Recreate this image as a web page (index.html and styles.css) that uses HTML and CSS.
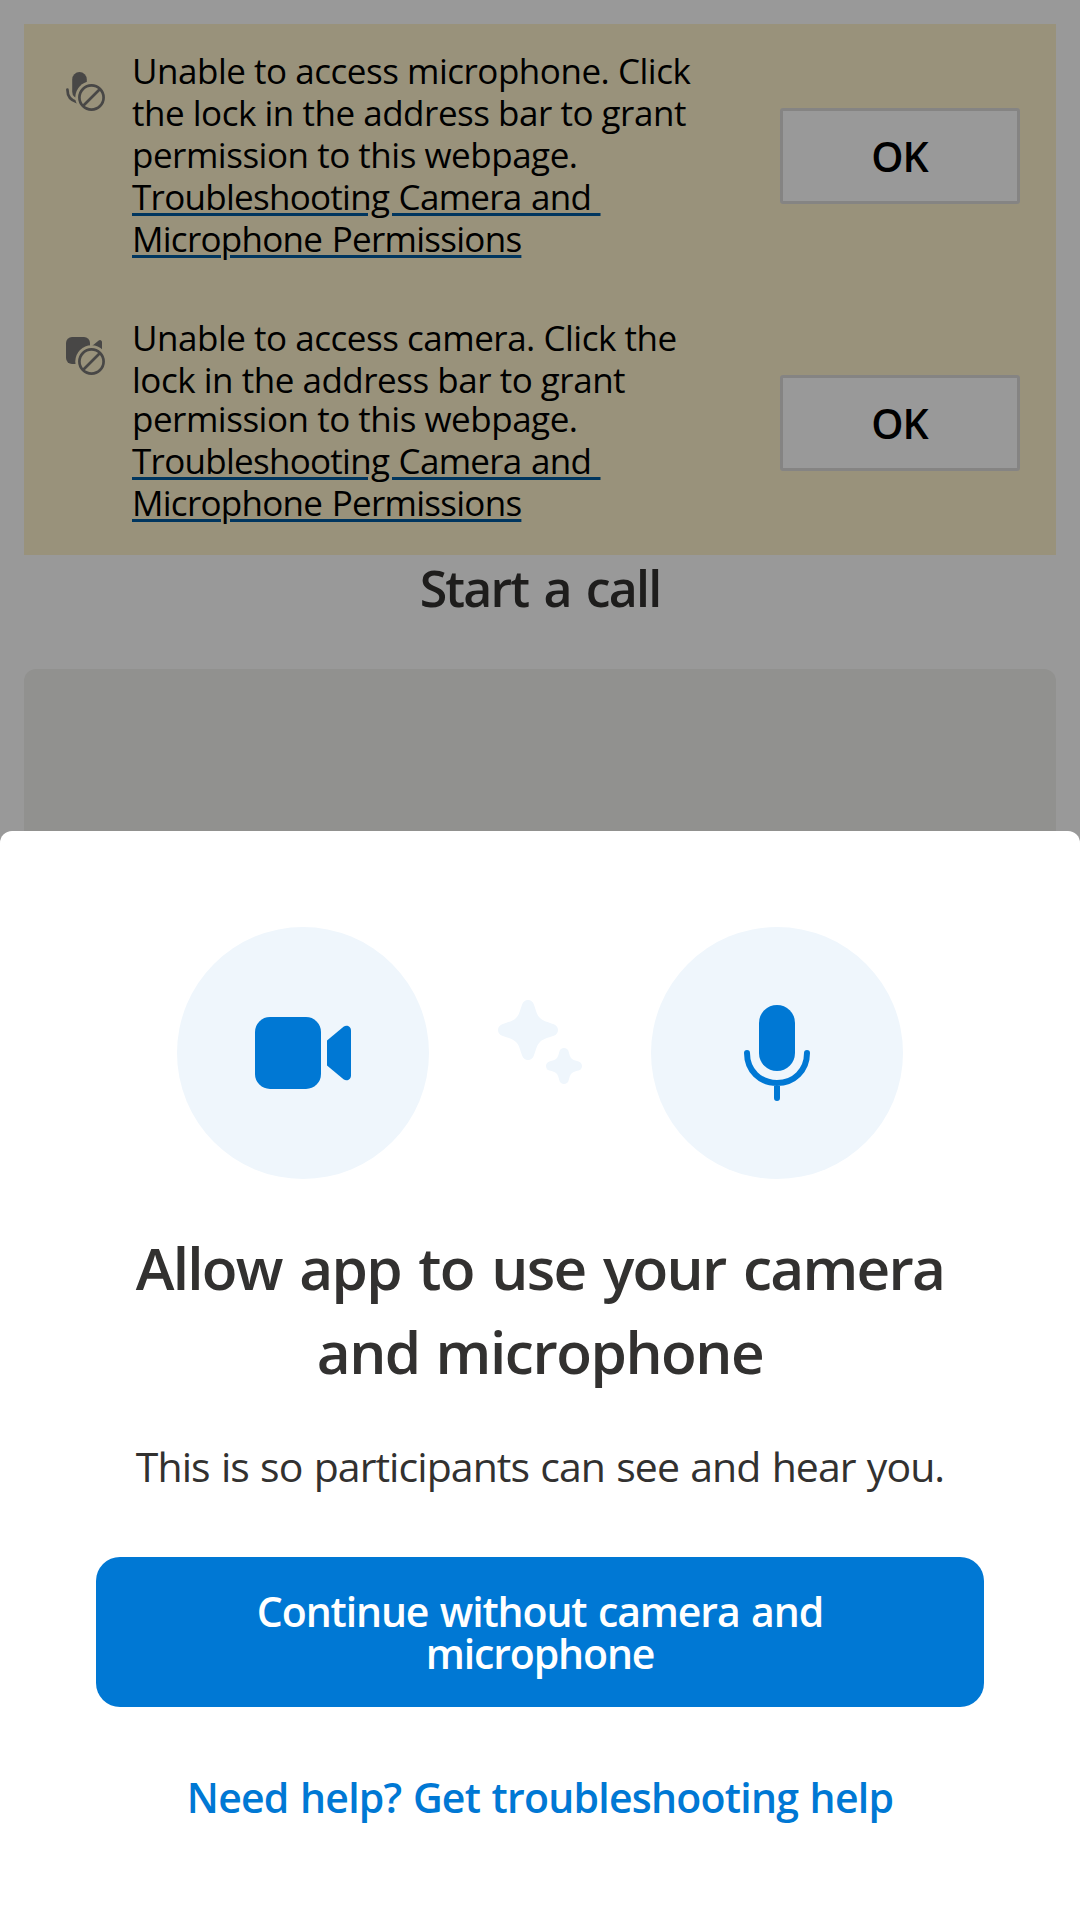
FILE: index.html
```
<!DOCTYPE html>
<html lang="en">
<head>
<meta charset="utf-8">
<title>Start a call</title>
<link rel="stylesheet" href="styles.css">
</head>
<body>
<main class="setup">
  <section class="alerts">
    <div class="alert">
      <svg class="alert-icon" viewBox="0 0 40 40">
        <mask id="mic-gap"><path fill="#fff" d="M0 0H40V40H0z"/><circle cx="25.5" cy="25.5" r="16.2" fill="#000"/></mask>
        <g mask="url(#mic-gap)">
          <rect x="6.2" y="0" width="14.6" height="27" rx="7.3" fill="currentColor"/>
          <path d="M1.4 17.6C1.4 24 5 28.600 11 30.200" fill="none" stroke="currentColor" stroke-width="2.700" stroke-linecap="round"/>
        </g>
        <g fill="none" stroke="currentColor" stroke-width="2.700"><circle cx="25.5" cy="25.5" r="12.1"/><path d="M17 34L34 17"/></g>
      </svg>
      <div class="alert-text">
        <p>Unable to access microphone. Click<br>the lock in the address bar to grant</p>
        <p>permission to this webpage.</p>
        <a class="alert-link">Troubleshooting Camera and <br>Microphone Permissions</a>
      </div>
      <button class="ok">OK</button>
    </div>
    <div class="alert alert-camera">
      <svg class="alert-icon" viewBox="0 0 40 40">
        <mask id="cam-gap"><path fill="#fff" d="M0 0H40V40H0z"/><circle cx="25.5" cy="24.5" r="16.2" fill="#000"/></mask>
        <g mask="url(#cam-gap)" fill="currentColor">
          <rect width="24" height="27" rx="6"/>
          <path d="M36 5a2 2 0 0 0-3.300-1.500L26 9V24H36z"/>
        </g>
        <g fill="none" stroke="currentColor" stroke-width="2.700"><circle cx="25.5" cy="24.5" r="12.1"/><path d="M17 33L34 16"/></g>
      </svg>
      <div class="alert-text">
        <p>Unable to access camera. Click the<br>lock in the address bar to grant</p>
        <p class="tight">permission to this webpage.</p>
        <a class="alert-link">Troubleshooting Camera and <br>Microphone Permissions</a>
      </div>
      <button class="ok">OK</button>
    </div>
  </section>
  <h1 class="heading">Start a call</h1>
  <div class="preview"></div>
</main>
<div class="overlay">
  <section class="sheet">
    <div class="devices">
      <div class="disc">
        <svg class="device-icon" viewBox="0 0 96 96" fill="#0078d4">
          <rect x="0" y="12" width="66" height="72" rx="15"/>
          <path d="M72 35.500L88.500 21.800C91.500 19.400 96 21.200 96 25.500V70.500C96 74.800 91.500 76.600 88.500 74.200L72 60.500z"/>
        </svg>
      </div>
      <svg class="sparkle" viewBox="0 0 84 84" fill="#eff6fc">
        <path transform="translate(30 30)" d="M0-30C2.800-30 4.900-28.300 5.800-25.800C8-19.500 8.800-15.200 12-12C15.200-8.800 19.500-8 25.800-5.800C28.300-4.900 30-2.800 30 0C30 2.800 28.300 4.900 25.800 5.800C19.500 8 15.200 8.800 12 12C8.800 15.200 8 19.500 5.800 25.800C4.900 28.300 2.800 30 0 30C-2.800 30-4.900 28.300-5.800 25.800C-8 19.500-8.800 15.200-12 12C-15.200 8.800-19.500 8-25.800 5.800C-28.300 4.900-30 2.800-30 0C-30-2.800-28.300-4.900-25.800-5.800C-19.500-8-15.200-8.800-12-12C-8.800-15.200-8-19.500-5.800-25.800C-4.900-28.300-2.800-30 0-30z"/>
        <path transform="translate(66 66)" d="M0-18C2.300-18 4-16.700 4.600-14.600C5.500-11.300 6-9 7.500-7.500C9-6 11.300-5.500 14.600-4.600C16.700-4 18-2.300 18 0C18 2.300 16.700 4 14.600 4.600C11.300 5.500 9 6 7.500 7.500C6 9 5.500 11.300 4.600 14.600C4 16.700 2.300 18 0 18C-2.300 18-4 16.700-4.600 14.600C-5.500 11.300-6 9-7.500 7.500C-9 6-11.300 5.500-14.600 4.600C-16.700 4-18 2.300-18 0C-18-2.300-16.700-4-14.600-4.600C-11.300-5.500-9-6-7.500-7.500C-6-9-5.500-11.300-4.600-14.600C-4-16.700-2.300-18 0-18z"/>
      </svg>
      <div class="disc">
        <svg class="device-icon" viewBox="0 0 96 96">
          <rect x="30" y="0" width="36" height="66" rx="18" fill="#0078d4"/>
          <path d="M18 48C18 65.500 31 78 48 78S78 65.500 78 48M48 78V93" fill="none" stroke="#0078d4" stroke-width="6" stroke-linecap="round"/>
        </svg>
      </div>
    </div>
    <h2 class="title">Allow app to use your camera<br><span class="title-end">and microphone</span></h2>
    <p class="subtitle">This is so participants can see and hear you.</p>
    <button class="continue">Continue without camera and<br>microphone</button>
    <a class="help">Need help? Get troubleshooting help</a>
  </section>
</div>
</body>
</html>
```
FILE: styles.css
```
* { box-sizing: border-box; }
body {
  margin: 0;
  height: 1920px;
  overflow: hidden;
  background: #fff;
  color: #323130;
  font-family: "Open Sans", "Noto Sans", sans-serif;
}
h1, h2, p { margin: 0; }
button { font-family: inherit; padding: 0; }

.setup { display: flex; flex-direction: column; padding: 24px 24px 0; }
.alerts { background: #fff4ce; }
.alert {
  display: grid;
  grid-template-columns: 66px 1fr 240px;
  align-items: start;
  height: 267px;
  padding: 0 36px 0 42px;
}
.alert-camera { height: 264px; }
.alert-icon { width: 40px; height: 40px; margin-top: 48px; color: #797775; }
.alert-camera .alert-icon { margin-top: 46px; }
.alert-text {
  padding-top: 26px;
  color: #000;
  font-size: 35px;
  line-height: 42px;
  letter-spacing: -0.48px;
  white-space: nowrap;
}
.tight { margin-top: -3px; }
.alert-link {
  white-space: pre;
  letter-spacing: -0.72px;
  word-spacing: 1px;
  text-decoration: underline #005a9e 3px;
  text-underline-offset: 3px;
}
.ok {
  height: 96px;
  margin-top: 84px;
  padding-right: 1px;
  border: 3px solid #dedcdb;
  border-radius: 3px;
  background: #fff;
  color: #000;
  font-size: 41px;
  font-weight: 600;
  line-height: 56px;
  letter-spacing: -1px;
}
.heading {
  margin-top: 3px;
  text-align: center;
  font-size: 50px;
  font-weight: 600;
  line-height: 60px;
  letter-spacing: -1.8px;
  word-spacing: 4px;
}
.preview { height: 600px; margin-top: 51px; border-radius: 12px; background: #f2f2ee; }

.overlay {
  position: absolute;
  inset: 0;
  display: flex;
  align-items: flex-end;
  background: rgba(0, 0, 0, 0.4);
}
.sheet {
  display: flex;
  flex-direction: column;
  align-items: center;
  width: 100%;
  height: 1089px;
  padding: 96px 96px 0;
  border-radius: 12px 12px 0 0;
  background: #fff;
  text-align: center;
  white-space: nowrap;
}
.devices { display: flex; align-items: center; gap: 69px; }
.disc {
  display: flex;
  align-items: center;
  justify-content: center;
  width: 252px;
  height: 252px;
  border-radius: 50%;
  background: #eff6fc;
}
.device-icon { width: 96px; height: 96px; }
.sparkle { width: 84px; height: 84px; margin-bottom: 22px; }
.title {
  margin-top: 46px;
  font-size: 58.5px;
  font-weight: 600;
  line-height: 84px;
  letter-spacing: -1.72px;
  word-spacing: 4px;
}
.title-end { letter-spacing: -1.45px; word-spacing: 2px; }
.subtitle {
  margin-top: 45px;
  font-size: 41px;
  line-height: 56px;
  letter-spacing: -0.94px;
  word-spacing: 1.5px;
}
.continue {
  width: 888px;
  height: 150px;
  margin-top: 63px;
  border: 0;
  border-radius: 24px;
  background: #0078d4;
  color: #fff;
  font-size: 41px;
  font-weight: 600;
  line-height: 42px;
  letter-spacing: -1.12px;
  word-spacing: 2px;
}
.help {
  margin-top: 62px;
  color: #0078d4;
  font-size: 41px;
  font-weight: 600;
  line-height: 56px;
  letter-spacing: -0.76px;
  word-spacing: 1.5px;
}
```
